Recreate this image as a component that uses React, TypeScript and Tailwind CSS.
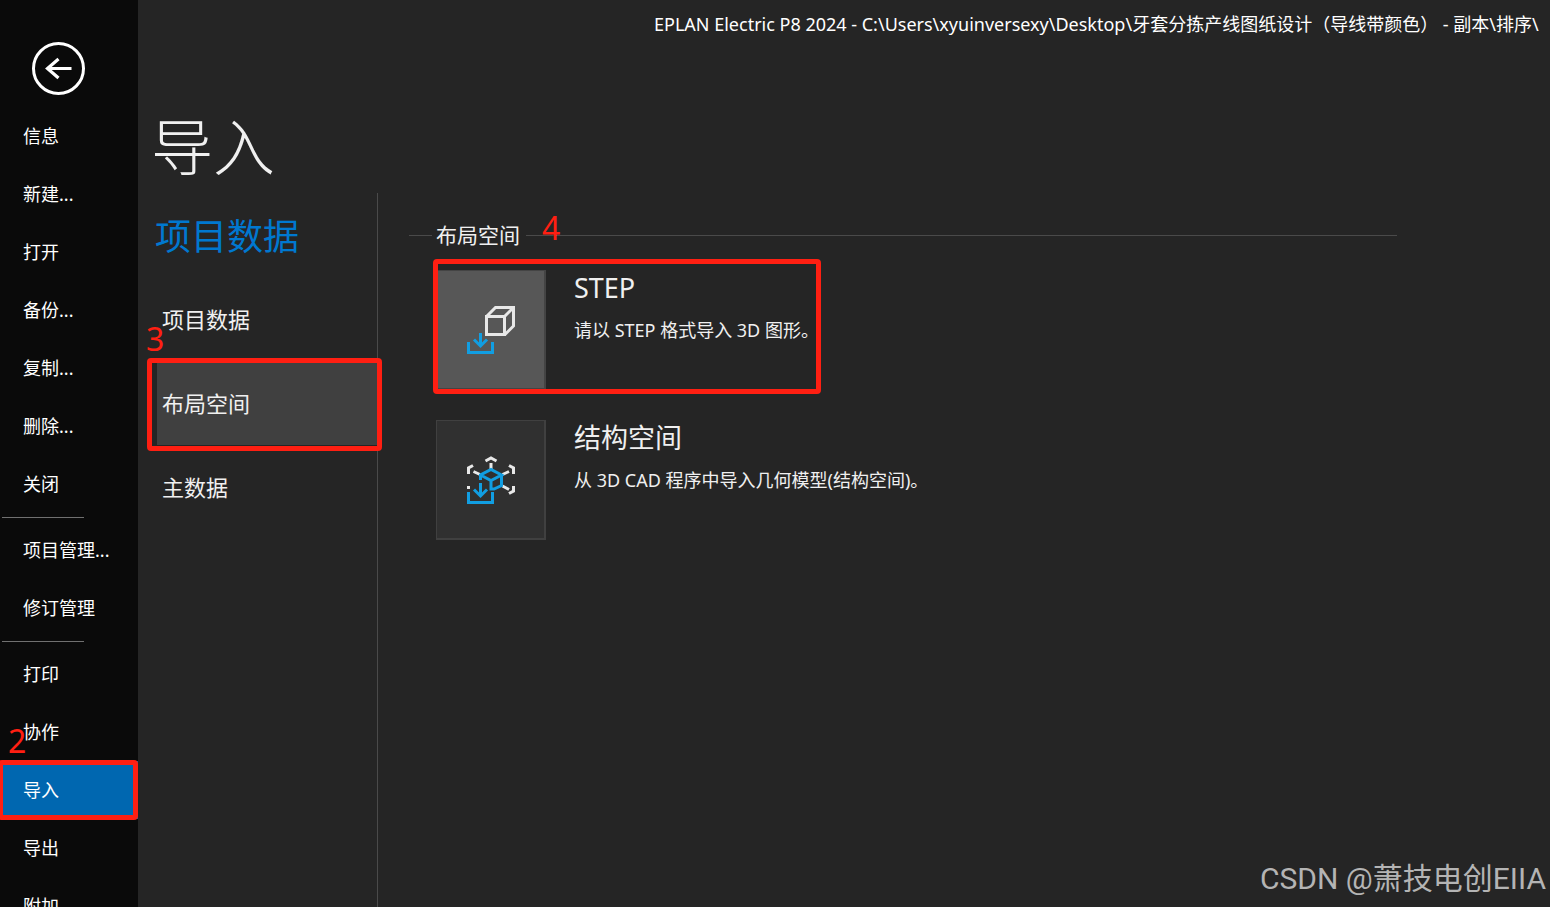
import { useState } from "react";
import type { ReactNode } from "react";
import clsx from "clsx";

type MenuEntry = { label: string; divider?: boolean; mark?: string };

const MENU: MenuEntry[] = [
  { label: "信息" },
  { label: "新建..." },
  { label: "打开" },
  { label: "备份..." },
  { label: "复制..." },
  { label: "删除..." },
  { label: "关闭" },
  { label: "项目管理...", divider: true },
  { label: "修订管理" },
  { label: "打印", divider: true },
  { label: "协作" },
  { label: "导入", mark: "2" },
  { label: "导出" },
  { label: "附加" },
];

const CATEGORIES = ["项目数据", "布局空间", "主数据"];

function BackIcon() {
  return (
    <svg viewBox="0 0 54 54" className="size-[54px]" fill="none" stroke="#fff" aria-hidden="true">
      <circle cx="26.500" cy="26.500" r="25" strokeWidth="3" />
      <path d="M39.500 26.500H15.500M26.500 17L15.500 26.500l11 9.500" strokeWidth="3.200" />
    </svg>
  );
}

function StepIcon() {
  return (
    <svg viewBox="0 0 48 48" className="size-12" fill="none" strokeWidth="3" aria-hidden="true">
      <path
        d="M19.500 10.500h18v18h-18zM19.500 10.500l9-9h18v18.500l-8.500 8.500M37.500 10.500l9-9"
        stroke="#e8e8e8"
      />
      <path d="M1.500 36v10.500h24V36M13.500 27v13M7 33.500l6.500 6.500 6.500-6.500" stroke="#119ee2" />
    </svg>
  );
}

function StructureIcon() {
  return (
    <svg viewBox="0 0 48 48" className="size-12" fill="none" strokeWidth="3" aria-hidden="true">
      <g stroke="#e8e8e8">
        <path d="M18.500 5L24 2l5.500 3M24 7v6" />
        <path d="M1.500 18v-6L6 9.500M46.500 18v-6L42 9.500M46.500 30v5L42 37.500" />
        <path d="M6.500 15.500l6.500 3M35.500 18.500l6.500-3M35.500 30l6.500 3.500" />
      </g>
      <path d="M0 30h3v3H0z" fill="#e8e8e8" />
      <g stroke="#119ee2">
        <path d="M13.500 24v-5L24 13.500 34.500 19 24 24.500 13.500 19M34.500 19v10.500L27 33h-3v-8.500" />
        <path d="M1.500 36v10.500h24V36M13.500 27v13M7 33.500l6.500 6.500 6.500-6.500" />
      </g>
    </svg>
  );
}

function Frame({ className }: { className: string }) {
  return (
    <span
      className={clsx("pointer-events-none absolute z-10 rounded border-5 border-[#ff1f12]", className)}
      aria-hidden="true"
    />
  );
}

function Mark({ className, children }: { className: string; children: ReactNode }) {
  return (
    <span
      className={clsx("pointer-events-none absolute z-10 text-[32px] leading-8 text-[#ff1f12]", className)}
    >
      {children}
    </span>
  );
}

type ImportOptionProps = {
  title: string;
  description: string;
  icon: ReactNode;
  active?: boolean;
};

function ImportOption({ title, description, icon, active = false }: ImportOptionProps) {
  return (
    <button type="button" className="relative flex items-start gap-7 text-left">
      <span
        className={clsx(
          "h-[120px] w-[110px] shrink-0 border-t border-r-2 border-b-2 border-l pt-[35px] pl-[30px]",
          active ? "border-[#444] bg-[#575757]" : "border-[#404040] bg-[#303030]",
        )}
      >
        {icon}
      </span>
      <span className="flex flex-col gap-1.5">
        <span className="text-[27px] leading-9 text-[#f0f0f0]">{title}</span>
        <span className="text-[18px] leading-9 text-[#f0f0f0]">{description}</span>
      </span>
      {active && <Frame className="-top-[11px] -right-0.5 -bottom-1 -left-[3px]" />}
    </button>
  );
}

export default function App() {
  const [page, setPage] = useState("导入");
  const [category, setCategory] = useState("布局空间");

  return (
    <div className="relative flex h-screen overflow-hidden bg-[#252525] font-['Noto_Sans','Noto_Sans_CJK_SC',sans-serif] text-white">
      <nav className="flex w-[138px] shrink-0 flex-col bg-[#0a0a0a]">
        <button type="button" className="mt-[42px] mb-[11px] ml-8 size-[54px] shrink-0" aria-label="返回">
          <BackIcon />
        </button>
        {MENU.map(({ label, divider, mark }) => (
          <div key={label} className="relative shrink-0">
            {divider && <hr className="mt-1 mr-[54px] mb-[3px] ml-0.5 border-[#707070]" />}
            <button
              type="button"
              onClick={() => setPage(label)}
              className={clsx(
                "block h-[58px] w-full pl-[23px] text-left text-[18px]",
                page === label && "bg-[#0067b0]",
              )}
            >
              {label}
            </button>
            {mark && (
              <>
                <Mark className="-top-9 left-2">{mark}</Mark>
                <Frame className="-inset-y-px right-0 -left-0.5" />
              </>
            )}
          </div>
        ))}
      </nav>

      <main className="flex min-w-0 flex-1 flex-col">
        <header className="flex h-12 shrink-0 items-center overflow-hidden pl-[516px] text-[18px] whitespace-nowrap">
          EPLAN Electric P8 2024 - C:\Users\xyuinversexy\Desktop\牙套分拣产线图纸设计（导线带颜色） - 副本\排序\
        </header>
        <h1 className="mt-[54px] pl-[13px] text-[62px] leading-[91px] font-light text-[#f0f0f0]">导入</h1>

        <div className="flex min-h-0 flex-1">
          <section className="w-60 shrink-0 border-r border-[#4a4a4a]">
            <h2 className="pt-4 pl-[17px] text-[36px] leading-14 text-[#0078d0]">项目数据</h2>
            <ul className="mt-3 pl-[19px]">
              {CATEGORIES.map((name) => (
                <li key={name} className="relative">
                  <button
                    type="button"
                    onClick={() => setCategory(name)}
                    className={clsx(
                      "block h-21 w-full pl-[5px] text-left text-[22px] text-[#f0f0f0]",
                      category === name && "bg-[#404040]",
                    )}
                  >
                    {name}
                  </button>
                  {name === "布局空间" && (
                    <>
                      <Mark className="-top-[38px] -left-[11px]">3</Mark>
                      <Frame className="-top-[3px] -right-[5px] -bottom-1.5 -left-2.5" />
                    </>
                  )}
                </li>
              ))}
            </ul>
          </section>

          <section className="min-w-0 flex-1 pt-[27px] pr-[153px] pl-[31px]">
            <div className="relative flex items-center">
              <span className="h-px w-[23px] bg-[#4a4a4a]" />
              <h3 className="px-1 text-[21px] leading-[30px] text-[#f0f0f0]">布局空间</h3>
              <span className="ml-0.5 h-px flex-1 bg-[#4a4a4a]" />
              <Mark className="-top-2 left-[133px]">4</Mark>
            </div>
            <div className="mt-5 flex flex-col items-start gap-[30px] pl-[27px]">
              <ImportOption
                title="STEP"
                description="请以 STEP 格式导入 3D 图形。"
                icon={<StepIcon />}
                active
              />
              <ImportOption
                title="结构空间"
                description="从 3D CAD 程序中导入几何模型(结构空间)。"
                icon={<StructureIcon />}
              />
            </div>
          </section>
        </div>
      </main>

      <p className="absolute right-1 bottom-1.5 font-['Roboto','Noto_Sans_CJK_SC',sans-serif] text-[30px] leading-11 text-[#b4b4b4]">
        CSDN @萧技电创EIIA
      </p>
    </div>
  );
}
